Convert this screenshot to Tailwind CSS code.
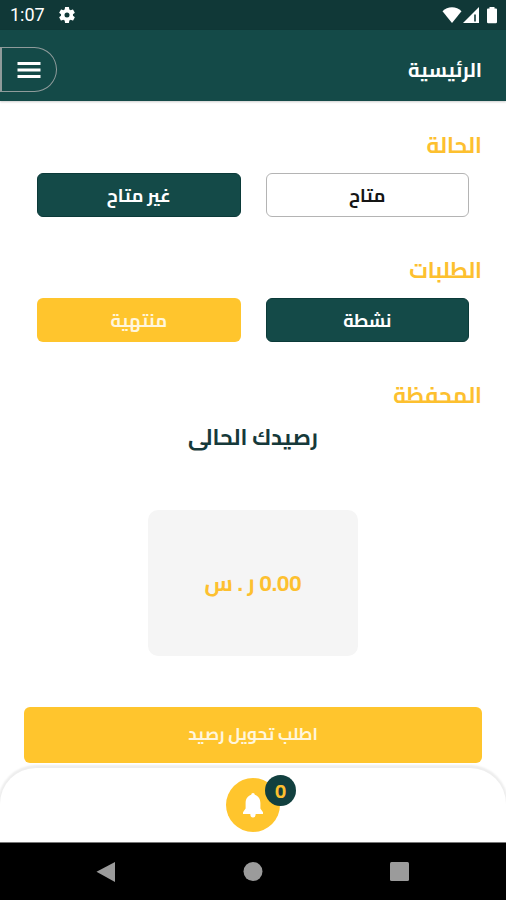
<!DOCTYPE html>
<html lang="ar" dir="rtl">
<head>
<meta charset="utf-8">
<meta name="viewport" content="width=device-width, initial-scale=1">
<title>الرئيسية</title>
<script src="https://cdn.jsdelivr.net/npm/@tailwindcss/browser@4"></script>
</head>
<body class="flex min-h-screen flex-col bg-white font-['Cairo','DejaVu_Sans',sans-serif] font-bold">
  <div dir="ltr" class="flex h-[30px] items-center justify-between bg-[#103837] pr-2 pl-[10px] text-white">
    <div class="flex items-center gap-3">
      <span class="font-['Roboto',sans-serif] text-[18px] leading-[30px] font-normal">1:07</span>
      <svg class="size-5" viewBox="0 0 24 24" fill="currentColor" aria-hidden="true"><path d="M19.14 12.94c.04-.3.06-.61.06-.94 0-.32-.02-.64-.07-.94l2.03-1.58c.18-.14.23-.41.12-.61l-1.92-3.32c-.12-.22-.37-.29-.59-.22l-2.39.96c-.5-.38-1.03-.7-1.62-.94l-.36-2.54c-.04-.24-.24-.41-.48-.41h-3.84c-.24 0-.43.17-.47.41l-.36 2.54c-.59.24-1.13.57-1.62.94l-2.39-.96c-.22-.08-.47 0-.59.22L2.74 8.870c-.12.21-.08.47.12.61l2.03 1.580c-.05.3-.09.63-.09.94s.02.64.07.94l-2.03 1.58c-.18.14-.23.41-.12.61l1.92 3.32c.12.22.37.29.59.22l2.39-.96c.5.38 1.03.7 1.62.94l.36 2.54c.05.24.24.41.48.41h3.84c.24 0 .44-.17.47-.41l.36-2.54c.59-.24 1.13-.56 1.62-.94l2.39.96c.22.08.47 0 .59-.22l1.92-3.32c.12-.22.07-.47-.12-.61l-2.01-1.58zM12 15a3 3 0 1 1 0-6 3 3 0 0 1 0 6z"/></svg>
    </div>
    <div class="flex items-center">
      <svg class="h-[18px] w-5" viewBox="0 0 20 18" fill="currentColor" aria-hidden="true"><path d="M10 17 .5 5.200C3 2.600 6.400 1.200 10 1.200s7 1.400 9.500 4z"/></svg>
      <svg class="h-[18px] w-[18px]" viewBox="0 0 18 18" aria-hidden="true"><path d="M1 17 17 1v16z" fill="currentColor"/><path d="M13 8.500v7" stroke="#103837" stroke-width="1.600"/></svg>
      <svg class="ml-[6px] h-[18px] w-3" viewBox="0 0 12 18" fill="currentColor" aria-hidden="true"><path d="M3.500 1h5v1.500H10a1 1 0 0 1 1 1V16a1.200 1.200 0 0 1-1.200 1.200H2.200A1.200 1.200 0 0 1 1 16V3.500a1 1 0 0 1 1-1h1.500z"/></svg>
    </div>
  </div>

  <header class="flex h-[71px] items-center justify-between bg-[#144a48] pt-2 pr-6 text-white shadow-[0_1px_2px_rgba(0,0,0,0.2)]">
    <h1 class="text-[20px] leading-8">الرئيسية</h1>
    <button type="button" aria-label="القائمة" class="flex h-[45px] w-[57px] items-center justify-center rounded-r-full border border-l-2 border-[#8f9b9b]">
      <svg class="h-4 w-6" viewBox="0 0 24 16" fill="currentColor" aria-hidden="true"><path d="M.5 0h23v3H.5zM.5 6.500h23v3H.5zM.5 13h23v3H.5z"/></svg>
    </button>
  </header>

  <main class="flex flex-1 flex-col px-6 pt-7 pb-[5px]">
    <section>
      <h2 class="text-[22px] leading-8 text-[#fdc02f]">الحالة</h2>
      <div class="mt-3 grid grid-cols-2 gap-[25px] px-[13px]">
        <button type="button" class="h-11 rounded-[6px] border border-[#b4b4b4] bg-white text-[18px] text-[#151515]">متاح</button>
        <button type="button" class="h-11 rounded-[6px] border border-[#0b3a39] bg-[#144a48] text-[18px] text-white">غير متاح</button>
      </div>
    </section>
    <section class="mt-[37px]">
      <h2 class="text-[22px] leading-8 text-[#fdc02f]">الطلبات</h2>
      <div class="mt-3 grid grid-cols-2 gap-[25px] px-[13px]">
        <button type="button" class="h-11 rounded-[6px] border border-[#0b3a39] bg-[#144a48] text-[18px] text-white">نشطة</button>
        <button type="button" class="h-11 rounded-[6px] bg-[#ffc52d] text-[18px] text-[#fff6dd]">منتهية</button>
      </div>
    </section>
    <section class="mt-[37px] flex flex-1 flex-col">
      <h2 class="text-[22px] leading-8 text-[#fdc02f]">المحفظة</h2>
      <p class="mt-[10px] text-center text-[22px] leading-8 text-[#16393a]">رصيدك الحالى</p>
      <div class="mx-auto mt-[57px] flex h-[146px] w-[46%] items-center justify-center rounded-[10px] bg-[#f5f5f5] text-[22px] text-[#fdc02f]">0.00 ر . س</div>
      <button type="button" class="mt-auto h-14 w-full rounded-[6px] bg-[#ffc52d] text-[17px] text-[#fff6dd]">اطلب تحويل رصيد</button>
    </section>
  </main>

  <footer class="flex h-[74px] items-center justify-center rounded-t-[36px] bg-white shadow-[0_-1px_2px_2px_rgba(0,0,0,0.07)]">
    <button type="button" aria-label="الإشعارات" class="relative flex size-[54px] items-center justify-center rounded-full bg-[#ffc52d] text-white">
      <svg class="h-[25px] w-5" viewBox="0 0 20 25" fill="currentColor" aria-hidden="true"><path d="M10 0a1.800 1.800 0 0 0-1.800 1.800C4.800 2.800 2.600 6 2.600 10v5.500L0 19.200V21h7.300a2.700 3.500 0 0 0 5.400 0H20v-1.800l-2.600-3.700V10c0-4-2.200-7.200-5.600-8.200A1.800 1.800 0 0 0 10 0z"/></svg>
      <span class="absolute -top-[3px] -right-4 flex size-[31px] items-center justify-center rounded-full bg-[#12403f] text-[20px] leading-none text-[#fdc02f]">0</span>
    </button>
  </footer>

  <nav dir="ltr" aria-label="النظام" class="z-10 grid h-[58px] grid-cols-3 items-center border-t border-[#777] bg-black px-[33px] text-[#9b9b9b]">
    <button type="button" aria-label="رجوع" class="flex justify-center"><svg class="size-5" viewBox="0 0 20 20" fill="currentColor"><path d="M.5 9.700 19 0v20z"/></svg></button>
    <button type="button" aria-label="الشاشة الرئيسية" class="flex justify-center"><svg class="size-5" viewBox="0 0 20 20" fill="currentColor"><circle cx="10" cy="9.500" r="9.500"/></svg></button>
    <button type="button" aria-label="التطبيقات الأخيرة" class="flex justify-center"><svg class="size-5" viewBox="0 0 20 20" fill="currentColor"><rect width="19" height="19" rx="1.500"/></svg></button>
  </nav>
</body>
</html>
